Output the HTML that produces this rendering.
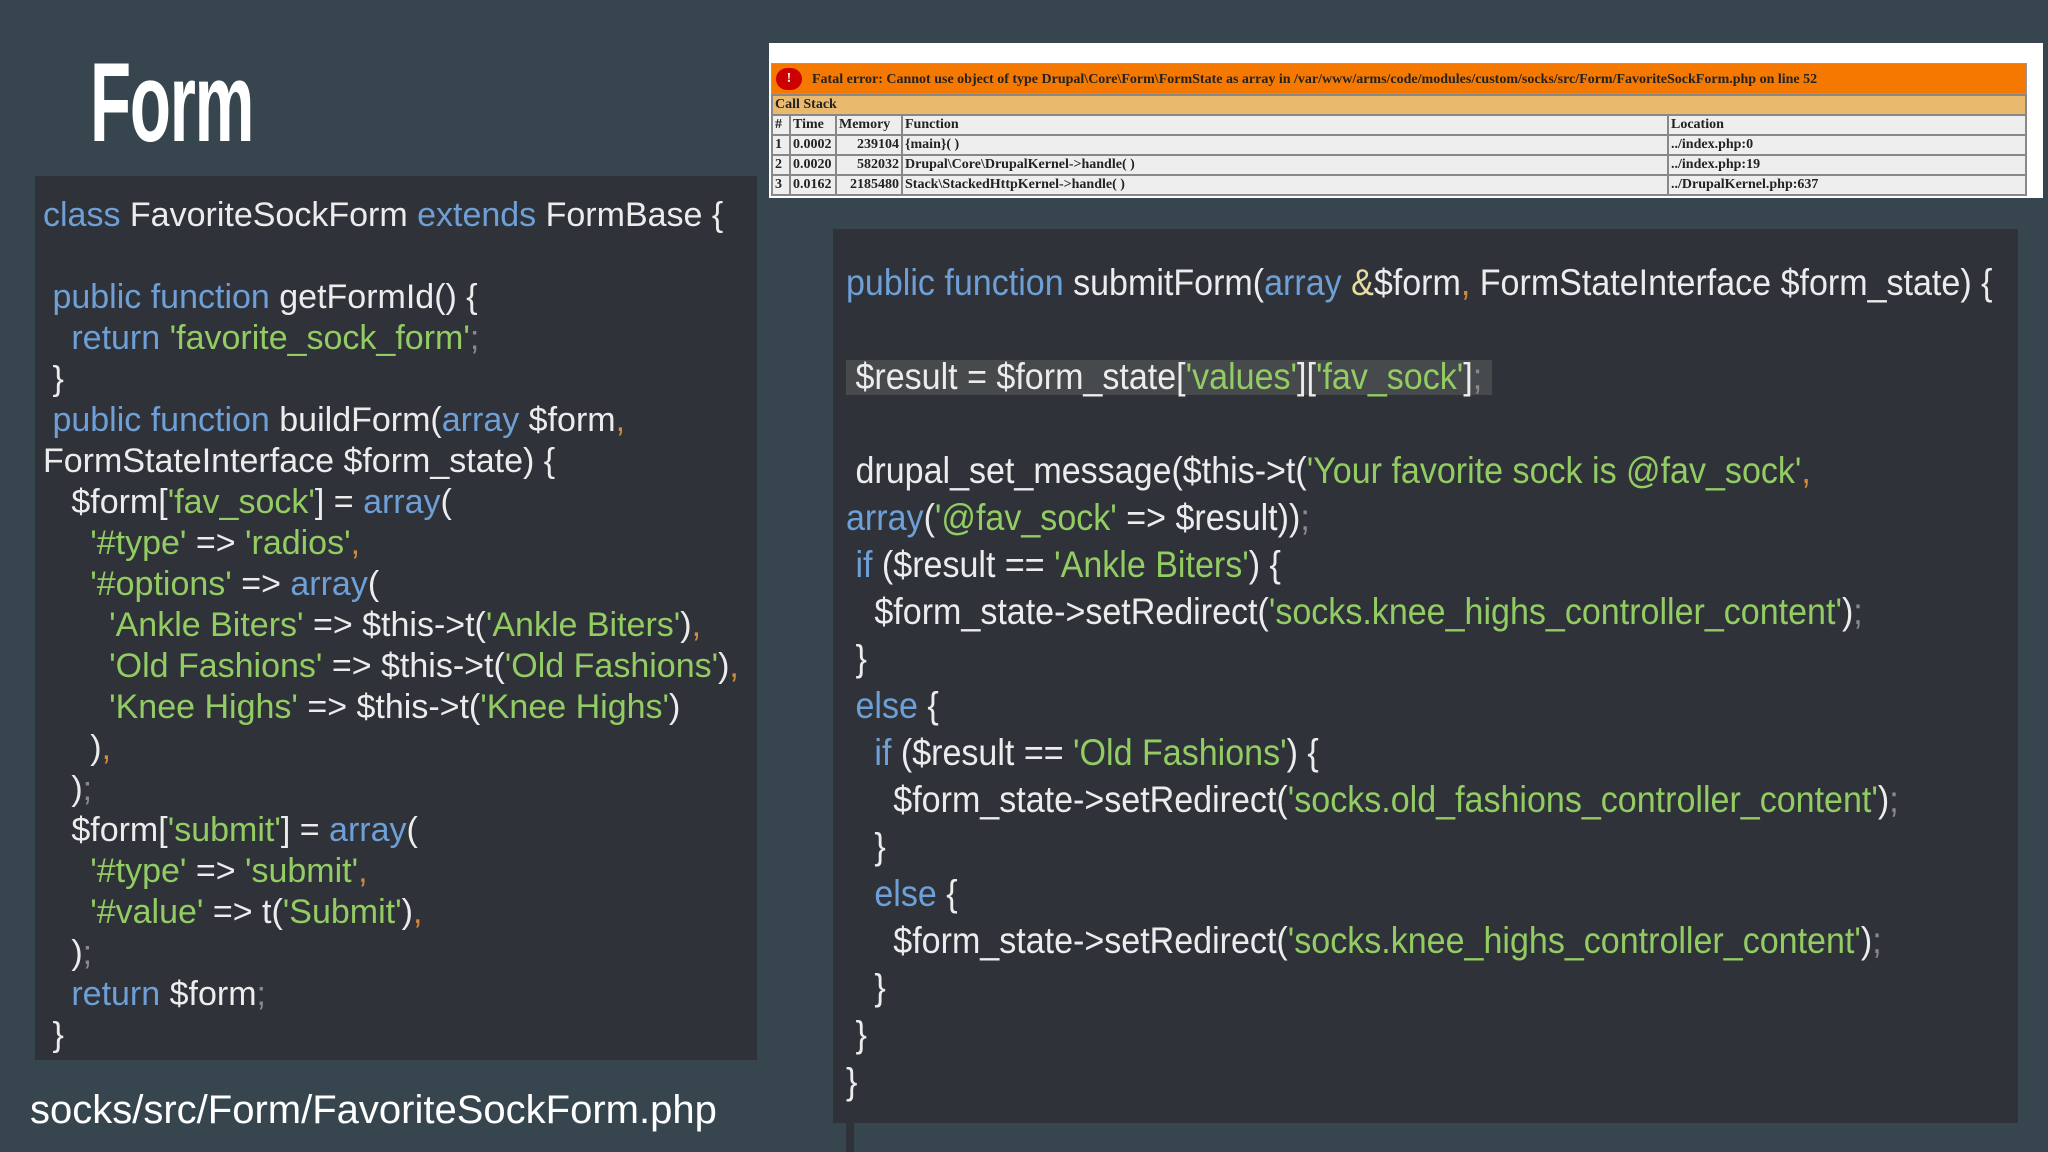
<!DOCTYPE html><html><head><meta charset="utf-8"><style>
body{margin:0;width:2048px;height:1152px;background:#37464e;overflow:hidden;position:relative;font-family:"Liberation Sans",sans-serif}
.t{position:absolute;left:90px;top:38px;font-size:112px;font-weight:bold;color:#fff;transform:scaleX(.6);transform-origin:left top;letter-spacing:-2px}
.box{position:absolute;background:#2f3339}
pre{margin:0;font-family:"Liberation Sans",sans-serif;color:#ececec;white-space:pre;transform-origin:left top;position:absolute}
.k{color:#6e9fd6}.s{color:#92cc62}.p{color:#8a8a8a}.o{color:#d08a3a}.a{color:#e6dca0}
#L{left:43px;top:195px;font-size:34px;line-height:41px;transform:scaleX(1.0)}
#R{left:846px;top:259px;font-size:37px;line-height:47px;transform:scaleX(.92)}
.hl{position:absolute;left:846px;top:360px;width:646px;height:35px;background:#474a4c}
.err{position:absolute;left:769px;top:43px;width:1274px;height:155px;background:#fff;font-family:"Liberation Serif",serif;font-size:14px;font-weight:bold;color:#222}
.err table{border-collapse:collapse;position:absolute;left:2px;top:51px;width:1256px}
.err td{border:2px solid #888;height:18px;padding:0 2px;background:#eee;white-space:nowrap;overflow:hidden}
</style></head><body>
<div class="t">Form</div>
<div class="box" style="left:35px;top:176px;width:722px;height:884px"></div>
<pre id="L"><span class="k">class</span> FavoriteSockForm <span class="k">extends</span> FormBase {

 <span class="k">public function</span> getFormId() {
   <span class="k">return</span> <span class="s">'favorite_sock_form'</span><span class="p">;</span>
 }
 <span class="k">public function</span> buildForm(<span class="k">array</span> $form<span class="o">,</span>
FormStateInterface $form_state) {
   $form[<span class="s">'fav_sock'</span>] = <span class="k">array</span>(
     <span class="s">'#type'</span> =&gt; <span class="s">'radios'</span><span class="o">,</span>
     <span class="s">'#options'</span> =&gt; <span class="k">array</span>(
       <span class="s">'Ankle Biters'</span> =&gt; $this-&gt;t(<span class="s">'Ankle Biters'</span>)<span class="o">,</span>
       <span class="s">'Old Fashions'</span> =&gt; $this-&gt;t(<span class="s">'Old Fashions'</span>)<span class="o">,</span>
       <span class="s">'Knee Highs'</span> =&gt; $this-&gt;t(<span class="s">'Knee Highs'</span>)
     )<span class="o">,</span>
   )<span class="p">;</span>
   $form[<span class="s">'submit'</span>] = <span class="k">array</span>(
     <span class="s">'#type'</span> =&gt; <span class="s">'submit'</span><span class="o">,</span>
     <span class="s">'#value'</span> =&gt; t(<span class="s">'Submit'</span>)<span class="o">,</span>
   )<span class="p">;</span>
   <span class="k">return</span> $form<span class="p">;</span>
 }</pre>
<div style="position:absolute;left:30px;top:1088px;font-size:40px;color:#fff;transform:scaleX(1.0);transform-origin:left top">socks/src/Form/FavoriteSockForm.php</div>
<div class="err">
<div style="position:absolute;left:2px;top:20px;width:1256px;height:31px;background:#f57900;color:#222;font-size:14px;line-height:31px;padding-left:40px;box-sizing:border-box;border:1px solid #999"><span style="position:absolute;left:4px;top:4px;width:26px;height:22px;border-radius:11px;background:#c00;color:#fff;text-align:center;line-height:22px">!</span>Fatal error: Cannot use object of type Drupal\Core\Form\FormState as array in /var/www/arms/code/modules/custom/socks/src/Form/FavoriteSockForm.php on line 52</div>
<table style="top:51px">
<tr><td colspan="5" style="background:#e9b96e">Call Stack</td></tr>
<tr><td style="width:12px">#</td><td style="width:40px">Time</td><td style="width:60px">Memory</td><td style="width:760px">Function</td><td>Location</td></tr>
<tr><td>1</td><td>0.0002</td><td style="text-align:right">239104</td><td>{main}( )</td><td>../index.php:0</td></tr>
<tr><td>2</td><td>0.0020</td><td style="text-align:right">582032</td><td>Drupal\Core\DrupalKernel-&gt;handle( )</td><td>../index.php:19</td></tr>
<tr><td>3</td><td>0.0162</td><td style="text-align:right">2185480</td><td>Stack\StackedHttpKernel-&gt;handle( )</td><td>../DrupalKernel.php:637</td></tr>
</table></div>
<div class="box" style="left:833px;top:229px;width:1185px;height:894px"></div>
<div style="position:absolute;left:846px;top:1123px;width:8px;height:29px;background:#2f3339"></div>
<div class="hl"></div>
<pre id="R"><span class="k">public function</span> submitForm(<span class="k">array</span> <span class="a">&amp;</span>$form<span class="o">,</span> FormStateInterface $form_state) {

 $result = $form_state[<span class="s">'values'</span>][<span class="s">'fav_sock'</span>]<span class="p">;</span>

 drupal_set_message($this-&gt;t(<span class="s">'Your favorite sock is @fav_sock'</span><span class="o">,</span>
<span class="k">array</span>(<span class="s">'@fav_sock'</span> =&gt; $result))<span class="p">;</span>
 <span class="k">if</span> ($result == <span class="s">'Ankle Biters'</span>) {
   $form_state-&gt;setRedirect(<span class="s">'socks.knee_highs_controller_content'</span>)<span class="p">;</span>
 }
 <span class="k">else</span> {
   <span class="k">if</span> ($result == <span class="s">'Old Fashions'</span>) {
     $form_state-&gt;setRedirect(<span class="s">'socks.old_fashions_controller_content'</span>)<span class="p">;</span>
   }
   <span class="k">else</span> {
     $form_state-&gt;setRedirect(<span class="s">'socks.knee_highs_controller_content'</span>)<span class="p">;</span>
   }
 }
}</pre>
</body></html>
